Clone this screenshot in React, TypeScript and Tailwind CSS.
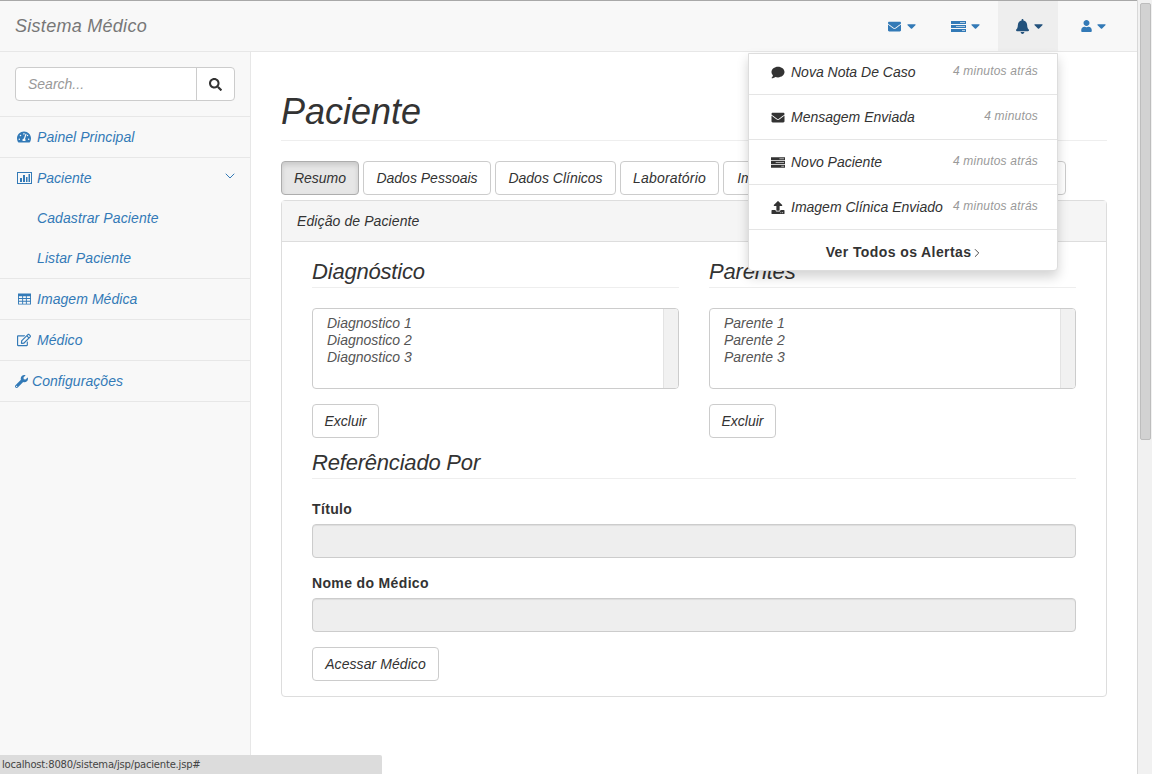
import type { ReactNode } from "react";
import { ChevronDown, ChevronRight } from "lucide-react";
import {
  FaBell,
  FaCaretDown,
  FaComment,
  FaEnvelope,
  FaRegEdit,
  FaSearch,
  FaTachometerAlt,
  FaUpload,
  FaUser,
  FaWrench,
} from "react-icons/fa";

// FontAwesome 4 glyphs that react-icons only ships in the newer shape
const TasksIcon = ({ className }: { className?: string }) => (
  <svg viewBox="0 0 15 11" className={className} fill="currentColor">
    <path d="M0 0h15v3H0zM0 4h15v3H0zM0 8h15v3H0z" />
    <path d="M9 1h5v1H9zM5 5h9v1H5zM11 9h3v1h-3z" fill="#fff" fillOpacity="0.6" />
  </svg>
);

const ChartIcon = ({ className }: { className?: string }) => (
  <svg viewBox="0 0 15 12" className={className} fill="currentColor">
    <path d="M0 0h15v12H0zM1 1v10h13V1z" fillRule="evenodd" />
    <path d="M3 6h2v4H3zM6 3h2v7H6zM9 5h1.500v5H9zM11.500 2h1.500v8h-1.500z" />
  </svg>
);

const TableIcon = ({ className }: { className?: string }) => (
  <svg viewBox="0 0 14 12" className={className} fill="currentColor">
    <path d="M0 0h14v12H0zM1 3v2h3.500V3zM5.500 3v2h3V3zM9.500 3v2H13V3zM1 6v2h3.500V6zM5.500 6v2h3V6zM9.500 6v2H13V6zM1 9v2h3.500V9zM5.500 9v2h3V9zM9.500 9v2H13V9z" fillRule="evenodd" />
  </svg>
);

const NavItem = ({ icon, active, className }: { icon: ReactNode; active?: boolean; className: string }) => (
  <div className={`flex h-full items-center ${className} ${active ? "bg-[#eeeeee] text-[#23527c]" : "text-[#337ab7]"}`}>
    {icon}
    <FaCaretDown className="ml-[5px] h-[14px] w-[9px]" />
  </div>
);

const SideItem = ({ icon, label, gap = "gap-[6px]" }: { icon: ReactNode; label: string; gap?: string }) => (
  <div className="border-b border-[#e7e7e7]">
    <div className={`flex h-[40px] items-center px-[15px] ${gap} text-[14px] tracking-[0.06px] text-[#337ab7]`}>
      {icon}
      <span className="flex-1">{label}</span>
    </div>
  </div>
);

const SubItem = ({ label }: { label: string }) => (
  <div className="flex h-[40px] items-center pl-[37px] text-[14px] tracking-[0.1px] text-[#337ab7]">{label}</div>
);

const TabButton = ({ label, active, className = "" }: { label: string; active?: boolean; className?: string }) => (
  <button
    className={`h-[34px] shrink-0 whitespace-nowrap rounded-[4px] border text-center text-[14px] italic text-[#333] ${
      active ? "border-[#adadad] bg-[#e6e6e6] shadow-[inset_0_3px_5px_rgba(0,0,0,0.125)]" : "border-[#ccc] bg-white"
    } ${className}`}
  >
    {label}
  </button>
);

const SectionTitle = ({ label }: { label: string }) => (
  <h3 className="border-b border-[#eeeeee] pb-[2px] text-[22px] italic leading-[27px] tracking-[-0.2px] text-[#333]">{label}</h3>
);

const ListBox = ({ items }: { items: string[] }) => (
  <div className="mt-[20px] flex h-[81px] overflow-hidden rounded-[4px] border border-[#ccc] bg-white">
    <div className="flex-1 pl-[14px] pt-[6px] text-[14px] leading-[17px] text-[#555]">
      {items.map((item) => (
        <div key={item}>{item}</div>
      ))}
    </div>
    <div className="w-[15px] border-l border-[#e3e3e3] bg-[#f1f1f1]" />
  </div>
);

const Field = ({ label }: { label: string }) => (
  <div>
    <label className="block text-[14px] font-bold not-italic leading-[20px] tracking-[0.35px] text-[#333]">{label}</label>
    <div className="mt-[5px] h-[34px] rounded-[4px] border border-[#ccc] bg-[#eeeeee] shadow-[inset_0_1px_1px_rgba(0,0,0,0.075)]" />
  </div>
);

const AlertRow = ({ icon, label, time, className }: { icon: ReactNode; label: string; time: string; className: string }) => (
  <div className={`flex items-start justify-between border-b border-[#e5e5e5] pl-[22px] pr-[19px] ${className}`}>
    <div className="flex items-center text-[14px] leading-[20px] text-[#333]">
      <span className="flex w-[20px] shrink-0 items-center">{icon}</span>
      {label}
    </div>
    <span className="pt-[1px] text-[12px] leading-[17px] tracking-[0.2px] text-[#999]">{time}</span>
  </div>
);

export default function App() {
  return (
    <div className="relative flex h-screen w-full overflow-hidden bg-white font-['Liberation_Sans',sans-serif] italic">
      <div className="flex min-w-0 flex-1 flex-col border-t border-[#a8a8a8]">
        <header className="flex h-[51px] shrink-0 items-center border-b border-[#e7e7e7] bg-[#f8f8f8] pl-[15px]">
          <span className="flex-1 text-[18px] tracking-[0.28px] text-[#777]">Sistema Médico</span>
          <div className="flex h-full pr-[15px]">
            <NavItem icon={<FaEnvelope className="h-[13px] w-[15px]" />} className="w-[64px] pl-[15px]" />
            <NavItem icon={<TasksIcon className="h-[11px] w-[15px]" />} className="w-[62px] pl-[15px]" />
            <NavItem active icon={<FaBell className="h-[15px] w-[13px]" />} className="w-[60px] pl-[18px]" />
            <NavItem icon={<FaUser className="h-[12px] w-[11px]" />} className="w-[64px] pl-[23px]" />
          </div>
        </header>

        <div className="flex min-h-0 flex-1">
          <aside className="w-[251px] shrink-0 border-r border-[#e7e7e7] bg-[#f8f8f8]">
            <div className="border-b border-[#e7e7e7] p-[15px]">
              <div className="flex h-[34px] overflow-hidden rounded-[4px] border border-[#ccc] bg-white">
                <div className="flex flex-1 items-center pl-[12px] text-[14px] text-[#999]">Search...</div>
                <div className="flex w-[38px] items-center justify-center border-l border-[#ccc] text-[#333]">
                  <FaSearch className="h-[13px] w-[13px]" />
                </div>
              </div>
            </div>
            <SideItem icon={<FaTachometerAlt className="ml-[2px] h-[14px] w-[14px]" />} label="Painel Principal" gap="gap-[6px]" />
            <div className="border-b border-[#e7e7e7]">
              <div className="flex h-[40px] items-center gap-[5px] pl-[17px] pr-[15px] text-[14px] text-[#337ab7]">
                <ChartIcon className="h-[12px] w-[15px]" />
                <span className="flex-1">Paciente</span>
                <ChevronDown strokeWidth={1.5} className="mb-[5px] mr-[-3px] h-[16px] w-[16px]" />
              </div>
              <SubItem label="Cadastrar Paciente" />
              <SubItem label="Listar Paciente" />
            </div>
            <SideItem icon={<TableIcon className="ml-[3px] h-[12px] w-[13px]" />} label="Imagem Médica" />
            <SideItem icon={<FaRegEdit className="ml-[2px] h-[14px] w-[14px]" />} label="Médico" />
            <SideItem icon={<FaWrench className="h-[13px] w-[13px]" />} label="Configurações" gap="gap-[4px]" />
          </aside>

          <main className="min-w-0 flex-1 px-[30px]">
            <h1 className="mt-[40px] border-b border-[#eeeeee] pb-[9px] text-[36px] leading-[39px] text-[#333]">Paciente</h1>
            <div className="mt-[20px] flex gap-[4px]">
              <TabButton active label="Resumo" className="w-[78px]" />
              <TabButton label="Dados Pessoais" className="w-[128px]" />
              <TabButton label="Dados Clínicos" className="w-[121px]" />
              <TabButton label="Laboratório" className="w-[99px] tracking-[0.2px]" />
              <TabButton label="Imagem Médica" className="w-[128px]" />
              <TabButton label="Referenciado Por" className="w-[211px]" />
            </div>
            <section className="mt-[5px] rounded-[4px] border border-[#ddd] bg-white">
              <div className="flex h-[41px] items-center border-b border-[#ddd] bg-[#f5f5f5] px-[15px] text-[14px] tracking-[0.1px] text-[#333]">
                Edição de Paciente
              </div>
              <div className="px-[30px] pb-[15px] pt-[16px]">
                <div className="grid grid-cols-2 gap-x-[30px]">
                  <div>
                    <SectionTitle label="Diagnóstico" />
                    <ListBox items={["Diagnostico 1", "Diagnostico 2", "Diagnostico 3"]} />
                    <TabButton label="Excluir" className="mt-[15px] w-[67px]" />
                  </div>
                  <div>
                    <SectionTitle label="Parentes" />
                    <ListBox items={["Parente 1", "Parente 2", "Parente 3"]} />
                    <TabButton label="Excluir" className="mt-[15px] w-[67px]" />
                  </div>
                </div>
                <div className="mt-[11px]">
                  <SectionTitle label="Referênciado Por" />
                </div>
                <div className="mt-[20px]">
                  <Field label="Título" />
                </div>
                <div className="mt-[15px]">
                  <Field label="Nome do Médico" />
                </div>
                <TabButton label="Acessar Médico" className="mt-[15px] w-[127px] tracking-[0.07px]" />
              </div>
            </section>
          </main>
        </div>
      </div>

      <div className="w-[15px] shrink-0 border-l border-[#d8d8d8] bg-[#f1f1f1] pl-[2px] pr-[1px] pt-[3px]">
        <div className="h-[437px] rounded-[2px] border border-[#bdbdbd] bg-[#d2d2d2]" />
      </div>

      {/* Alerts dropdown */}
      <div className="absolute left-[748px] top-[53px] w-[310px] rounded-b-[4px] border border-[#ddd] bg-white shadow-[0_6px_12px_rgba(0,0,0,0.175)]">
        <AlertRow className="h-[41px] pt-[8px]" icon={<FaComment className="h-[13px] w-[14px]" />} label="Nova Nota De Caso" time="4 minutos atrás" />
        <AlertRow className="h-[45px] pt-[12px]" icon={<FaEnvelope className="h-[13px] w-[14px]" />} label="Mensagem Enviada" time="4 minutos" />
        <AlertRow className="h-[45px] pt-[12px]" icon={<TasksIcon className="h-[11px] w-[14px]" />} label="Novo Paciente" time="4 minutos atrás" />
        <AlertRow className="h-[45px] pt-[12px]" icon={<FaUpload className="h-[13px] w-[14px]" />} label="Imagem Clínica Enviado" time="4 minutos atrás" />
        <div className="flex h-[40px] items-center justify-center pl-[4px] pt-[5px] text-[14px] font-bold not-italic tracking-[0.4px] text-[#333]">
          Ver Todos os Alertas
          <ChevronRight strokeWidth={1.5} className="ml-[-1px] h-[14px] w-[14px]" />
        </div>
      </div>

      {/* Browser status bubble */}
      <div className="absolute bottom-0 left-0 flex h-[19px] w-[382px] items-center rounded-tr-[2px] bg-[#dcdcdc] pl-[2px] font-['DejaVu_Sans',sans-serif] text-[10px] not-italic tracking-[-0.2px] text-[#444]">
        localhost:8080/sistema/jsp/paciente.jsp#
      </div>
    </div>
  );
}
